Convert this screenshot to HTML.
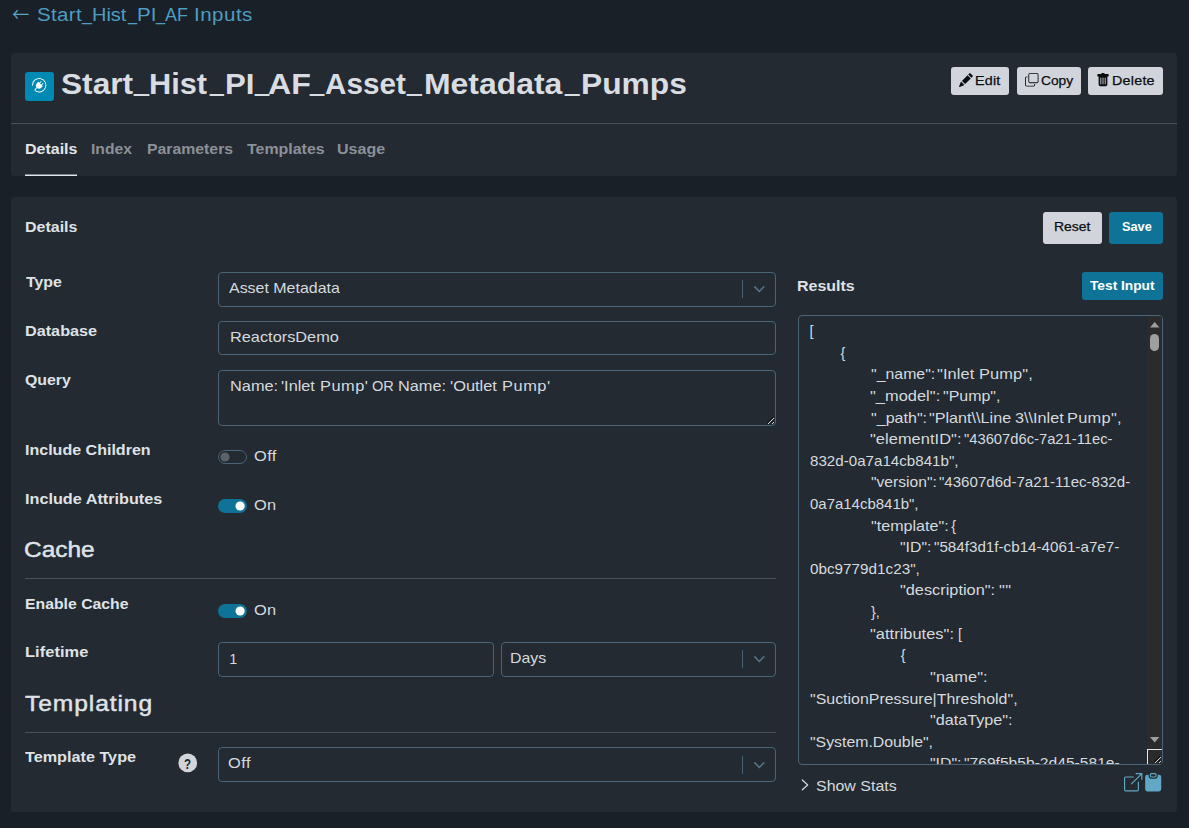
<!DOCTYPE html>
<html lang="en"><head><meta charset="utf-8"><title>Start_Hist_PI_AF_Asset_Metadata_Pumps</title>
<style>
html,body{margin:0;padding:0}
body{width:1189px;height:828px;overflow:hidden;background:#192027;position:relative;font-family:"Liberation Sans",sans-serif;}
.a{position:absolute;box-sizing:border-box}
.t{position:absolute;white-space:pre;line-height:1;transform-origin:0 50%;display:block}
.g{position:absolute;left:0;white-space:pre;line-height:1}
.c{display:inline-block;position:relative;transform-origin:0 50%}
.card{background:#232a31;border-radius:3px}
.btn{border-radius:3px;background:#d1d5db}
.btn.pri{background:#0f7398}
.inp{border:1px solid #4a6376;border-radius:4px;background:#232a31}
.hr{height:1px;background:#4a525a}
svg{position:absolute;overflow:visible}
</style></head><body>
<!-- back arrow -->


<!-- header card -->
<div class="a card" style="left:11px;top:53px;width:1166px;height:123px"></div>
<div class="a hr" style="left:11px;top:123px;width:1166px"></div>
<div class="a" style="left:25px;top:72px;width:29px;height:29px;border-radius:3px;background:#0089b3"></div>
<svg style="left:32.3px;top:78.3px" width="14.4" height="14.4" viewBox="0 0 16 16" fill="#fff"><path fill-rule="evenodd" d="M1 8a7 7 0 1 1 2.898 5.673c-.167-.121-.216-.406-.002-.62l1.800-1.800a3.500 3.500 0 0 0 4.572-.328l1.414-1.415a.5.500 0 0 0 0-.707l-.707-.707 1.559-1.563a.5.500 0 1 0-.708-.706l-1.559 1.562-1.414-1.414 1.560-1.562a.5.500 0 1 0-.707-.706l-1.560 1.560-.707-.706a.5.500 0 0 0-.707 0L5.318 5.975a3.500 3.500 0 0 0-.328 4.571l-1.800 1.800c-.58.580-.62 1.600.121 2.137A8 8 0 1 0 0 8a.5.500 0 0 0 1 0Z"/></svg>

<!-- header buttons -->
<div class="a btn" style="left:951px;top:67px;width:58px;height:28px"></div>
<div class="a btn" style="left:1017px;top:67px;width:64px;height:28px"></div>
<div class="a btn" style="left:1088px;top:67px;width:75px;height:28px"></div>
<svg style="left:959px;top:72.500px" width="14" height="14" viewBox="0 0 16 16" fill="#090b0e"><path d="M12.854.146a.5.5 0 0 0-.707 0L10.5 1.793 14.207 5.5l1.647-1.646a.5.5 0 0 0 0-.708l-3-3zm.646 6.061L9.793 2.500 3.293 9H3.500a.5.5 0 0 1 .5.5v.5h.5a.5.5 0 0 1 .5.5v.5h.5a.5.5 0 0 1 .5.5v.5h.5a.5.5 0 0 1 .5.5v.207l6.500-6.500zm-7.468 7.468A.5.5 0 0 1 6 13.500V13h-.5a.5.5 0 0 1-.5-.5V12h-.5a.5.5 0 0 1-.5-.5V11h-.5a.5.5 0 0 1-.5-.5V10h-.5a.499.499 0 0 1-.175-.032l-.179.178a.5.5 0 0 0-.110.168l-2 5a.5.5 0 0 0 .650.650l5-2a.5.5 0 0 0 .168-.110l.178-.178z"/></svg>
<svg style="left:1024.500px;top:72.500px" width="13.500" height="13.500" viewBox="0 0 16 16" fill="#090b0e"><path fill-rule="evenodd" d="M4 2a2 2 0 0 1 2-2h8a2 2 0 0 1 2 2v8a2 2 0 0 1-2 2H6a2 2 0 0 1-2-2V2Zm2-1a1 1 0 0 0-1 1v8a1 1 0 0 0 1 1h8a1 1 0 0 0 1-1V2a1 1 0 0 0-1-1H6ZM2 5a1 1 0 0 0-1 1v8a1 1 0 0 0 1 1h8a1 1 0 0 0 1-1v-1h1v1a2 2 0 0 1-2 2H2a2 2 0 0 1-2-2V6a2 2 0 0 1 2-2h1v1H2Z"/></svg>
<svg style="left:1096px;top:72.800px" width="14" height="14" viewBox="0 0 16 16" fill="#090b0e"><path d="M2.500 1a1 1 0 0 0-1 1v1a1 1 0 0 0 1 1H3v9a2 2 0 0 0 2 2h6a2 2 0 0 0 2-2V4h.5a1 1 0 0 0 1-1V2a1 1 0 0 0-1-1H10a1 1 0 0 0-1-1H7a1 1 0 0 0-1 1H2.500zm3 4a.5.5 0 0 1 .5.5v7a.5.5 0 0 1-1 0v-7a.5.5 0 0 1 .5-.5zM8 5a.5.5 0 0 1 .5.5v7a.5.5 0 0 1-1 0v-7A.5.5 0 0 1 8 5zm3 .5v7a.5.5 0 0 1-1 0v-7a.5.5 0 0 1 1 0z"/></svg>

<!-- tab underline -->
<div class="a" style="left:25px;top:174px;width:52px;height:1px;background:#7f858b"></div><div class="a" style="left:25px;top:175px;width:52px;height:1px;background:#e2e5e9"></div>

<!-- details card -->
<div class="a card" style="left:11px;top:197px;width:1166px;height:615px"></div>
<div class="a btn" style="left:1043px;top:212px;width:59px;height:32px"></div>
<div class="a btn pri" style="left:1109px;top:212px;width:54px;height:32px"></div>
<div class="a btn pri" style="left:1082px;top:272px;width:81px;height:28px"></div>

<!-- form controls -->
<div class="a inp" style="left:217.5px;top:271.5px;width:558.5px;height:35px"></div>
<div class="a" style="left:742px;top:280px;width:1px;height:18px;background:#4a6376"></div>
<svg style="left:753.700px;top:286px" width="10.6" height="7" viewBox="0 0 11.2 7" preserveAspectRatio="none"><path d="M0.9 0.9 5.6 5.5 10.3 0.9" fill="none" stroke="#587183" stroke-width="1.7" stroke-linecap="round" stroke-linejoin="round"/></svg>
<div class="a inp" style="left:217.5px;top:320.5px;width:558.5px;height:34.5px"></div>
<div class="a inp" style="left:217.5px;top:369.5px;width:558.5px;height:56.5px"></div>
<svg style="left:0;top:0" width="1189" height="828" shape-rendering="crispEdges"><rect x="767" y="422" width="1" height="1" fill="#0c0e10"/><rect x="768" y="421" width="1" height="1" fill="#0c0e10"/><rect x="769" y="420" width="1" height="1" fill="#0c0e10"/><rect x="770" y="419" width="1" height="1" fill="#0c0e10"/><rect x="771" y="418" width="1" height="1" fill="#0c0e10"/><rect x="772" y="417" width="1" height="1" fill="#0c0e10"/><rect x="771" y="422" width="1" height="1" fill="#0c0e10"/><rect x="772" y="421" width="1" height="1" fill="#0c0e10"/><rect x="768" y="423" width="1" height="1" fill="#d4d4d4"/><rect x="769" y="422" width="1" height="1" fill="#d4d4d4"/><rect x="770" y="421" width="1" height="1" fill="#d4d4d4"/><rect x="771" y="420" width="1" height="1" fill="#d4d4d4"/><rect x="772" y="419" width="1" height="1" fill="#d4d4d4"/><rect x="773" y="418" width="1" height="1" fill="#d4d4d4"/><rect x="772" y="423" width="1" height="1" fill="#d4d4d4"/><rect x="773" y="422" width="1" height="1" fill="#d4d4d4"/></svg>

<!-- toggles -->
<svg style="left:0;top:0" width="1189" height="828" viewBox="0 0 1189 828">
<rect x="218.500" y="450.500" width="28" height="13" rx="6.500" fill="none" stroke="#4a6376" stroke-width="1"/>
<circle cx="225" cy="457" r="4.600" fill="#5d6269"/>
<rect x="218" y="499" width="28.900" height="14" rx="7" fill="#0f7398"/>
<circle cx="240.100" cy="506" r="4.600" fill="#fff"/>
<rect x="218" y="604" width="28.900" height="14" rx="7" fill="#0f7398"/>
<circle cx="240.100" cy="611" r="4.600" fill="#fff"/>
</svg>
<div class="a hr" style="left:25px;top:578px;width:751px"></div>
<div class="a inp" style="left:217.5px;top:642px;width:276.5px;height:34.500px"></div>
<div class="a inp" style="left:500.5px;top:642px;width:275.5px;height:35px"></div>
<div class="a" style="left:742px;top:650px;width:1px;height:18px;background:#4a6376"></div>
<svg style="left:753.700px;top:656px" width="10.6" height="7" viewBox="0 0 11.2 7" preserveAspectRatio="none"><path d="M0.9 0.9 5.6 5.5 10.3 0.9" fill="none" stroke="#587183" stroke-width="1.7" stroke-linecap="round" stroke-linejoin="round"/></svg>
<div class="a hr" style="left:25px;top:732px;width:751px"></div>
<svg style="left:0;top:0" width="1189" height="828"><circle cx="187.750" cy="762.950" r="9.400" fill="#d1d5db"/></svg>
<div class="a inp" style="left:217.5px;top:747px;width:558.5px;height:35px"></div>
<div class="a" style="left:742px;top:756px;width:1px;height:18px;background:#4a6376"></div>
<svg style="left:753.700px;top:762.300px" width="10.6" height="7" viewBox="0 0 11.2 7" preserveAspectRatio="none"><path d="M0.9 0.9 5.6 5.5 10.3 0.9" fill="none" stroke="#587183" stroke-width="1.7" stroke-linecap="round" stroke-linejoin="round"/></svg>

<span class="t" style="left:12.11px;top:3.89px;font-size:19.5px;font-weight:400;color:#5aa3c6;font-family:'Noto Sans CJK JP','Noto Sans CJK SC','DejaVu Sans',sans-serif;transform:scaleX(0.8889);">←</span>
<div class="g" style="top:6.36px;font-size:18px;font-weight:400;color:#4f9dc3"><span class="c" style="letter-spacing:0.293px;left:37.06px;transform:scaleX(1.1400);">Start</span><span class="c" style="left:42.59px;top:-1.8px;transform:scaleX(0.9825);">_</span><span class="c" style="left:42.74px;transform:scaleX(1.1095);">Hist</span><span class="c" style="left:47.06px;top:-1.8px;transform:scaleX(0.9076);">_</span><span class="c" style="letter-spacing:0.148px;left:46.58px;transform:scaleX(1.1400);">PI</span><span class="c" style="left:48.13px;top:-1.8px;transform:scaleX(0.9076);">_</span><span class="c" style="left:46.96px;transform:scaleX(0.9950);">AF</span> <span class="c" style="letter-spacing:0.429px;left:47.92px;transform:scaleX(1.1400);">Inputs</span></div>
<div class="g" style="top:69.62px;font-size:28.8px;font-weight:700;color:#d9dde1"><span class="c" style="left:61.21px;transform:scaleX(1.0996);">Start</span><span class="c" style="font-weight:400;left:68.01px;top:-3.2px;transform:scaleX(0.9357);">_</span><span class="c" style="left:67.65px;transform:scaleX(1.0673);">Hist</span><span class="c" style="font-weight:400;left:73.75px;top:-3.2px;transform:scaleX(0.8538);">_</span><span class="c" style="left:72.90px;transform:scaleX(1.0840);">PI</span><span class="c" style="font-weight:400;left:75.43px;top:-3.2px;transform:scaleX(0.8830);">_</span><span class="c" style="left:72.72px;transform:scaleX(1.1163);">AF</span><span class="c" style="font-weight:400;left:76.53px;top:-3.2px;transform:scaleX(0.8830);">_</span><span class="c" style="left:75.25px;transform:scaleX(1.0302);">Asset</span><span class="c" style="font-weight:400;left:79.09px;top:-3.2px;transform:scaleX(0.9181);">_</span><span class="c" style="left:80.16px;transform:scaleX(1.1086);">Metadata</span><span class="c" style="font-weight:400;left:95.94px;top:-3.2px;transform:scaleX(0.9006);">_</span><span class="c" style="left:95.73px;transform:scaleX(1.1026);">Pumps</span></div>
<span class="t" style="left:975.38px;top:74.93px;font-size:12.6px;font-weight:400;color:#0b0e11;-webkit-text-stroke:0.25px #0b0e11;transform:scaleX(1.1400);letter-spacing:0.182px;">Edit</span>
<span class="t" style="left:1040.75px;top:74.93px;font-size:12.6px;font-weight:400;color:#0b0e11;-webkit-text-stroke:0.25px #0b0e11;transform:scaleX(1.0928);">Copy</span>
<span class="t" style="left:1112.38px;top:74.93px;font-size:12.6px;font-weight:400;color:#0b0e11;-webkit-text-stroke:0.25px #0b0e11;transform:scaleX(1.1400);letter-spacing:0.190px;">Delete</span>
<span class="t" style="left:25.10px;top:141.81px;font-size:14.4px;font-weight:700;color:#e2e5e9;transform:scaleX(1.1107);">Details</span>
<span class="t" style="left:90.72px;top:141.81px;font-size:14.4px;font-weight:700;color:#8b9198;transform:scaleX(1.0869);">Index</span>
<span class="t" style="left:146.51px;top:141.81px;font-size:14.4px;font-weight:700;color:#8b9198;transform:scaleX(1.0978);">Parameters</span>
<span class="t" style="left:247.00px;top:141.81px;font-size:14.4px;font-weight:700;color:#8b9198;transform:scaleX(1.1067);">Templates</span>
<span class="t" style="left:337.25px;top:141.81px;font-size:14.4px;font-weight:700;color:#8b9198;transform:scaleX(1.1141);">Usage</span>
<span class="t" style="left:25.10px;top:220.31px;font-size:14.4px;font-weight:700;color:#dfe2e6;transform:scaleX(1.1107);">Details</span>
<span class="t" style="left:1053.81px;top:221.33px;font-size:12.6px;font-weight:400;color:#0b0e11;-webkit-text-stroke:0.25px #0b0e11;transform:scaleX(1.1072);">Reset</span>
<span class="t" style="left:1121.50px;top:221.33px;font-size:12.6px;font-weight:700;color:#ffffff;transform:scaleX(1.0133);">Save</span>
<span class="t" style="left:25.50px;top:274.81px;font-size:14.4px;font-weight:700;color:#dfe2e6;transform:scaleX(1.1031);">Type</span>
<span class="t" style="left:24.79px;top:323.81px;font-size:14.4px;font-weight:700;color:#dfe2e6;transform:scaleX(1.1262);">Database</span>
<span class="t" style="left:25.30px;top:372.81px;font-size:14.4px;font-weight:700;color:#dfe2e6;transform:scaleX(1.1028);">Query</span>
<span class="t" style="left:24.80px;top:442.81px;font-size:14.4px;font-weight:700;color:#dfe2e6;transform:scaleX(1.1141);">Include Children</span>
<span class="t" style="left:24.79px;top:491.81px;font-size:14.4px;font-weight:700;color:#dfe2e6;transform:scaleX(1.1272);">Include Attributes</span>
<span class="t" style="left:24.45px;top:538.72px;font-size:21.6px;font-weight:400;color:#dfe2e6;-webkit-text-stroke:0.45px #dfe2e6;transform:scaleX(1.1330);">Cache</span>
<span class="t" style="left:24.61px;top:596.81px;font-size:14.4px;font-weight:700;color:#dfe2e6;transform:scaleX(1.0968);">Enable Cache</span>
<span class="t" style="left:24.57px;top:644.81px;font-size:14.4px;font-weight:700;color:#dfe2e6;transform:scaleX(1.1400);letter-spacing:0.050px;">Lifetime</span>
<span class="t" style="left:25.22px;top:693.02px;font-size:21.6px;font-weight:400;color:#dfe2e6;-webkit-text-stroke:0.45px #dfe2e6;transform:scaleX(1.1400);letter-spacing:0.788px;">Templating</span>
<span class="t" style="left:25.00px;top:750.11px;font-size:14.4px;font-weight:700;color:#dfe2e6;transform:scaleX(1.1258);">Template Type</span>
<span class="t" style="left:229.00px;top:280.81px;font-size:14.4px;font-weight:400;color:#d6dade;transform:scaleX(1.1084);">Asset Metadata</span>
<span class="t" style="left:229.72px;top:330.11px;font-size:14.4px;font-weight:400;color:#d6dade;transform:scaleX(1.1344);">ReactorsDemo</span>
<div class="g" style="top:379.01px;font-size:14.4px;font-weight:400;color:#d6dade"><span class="c" style="left:230.12px;transform:scaleX(1.1354);">Name:</span> <span class="c" style="left:235.05px;transform:scaleX(1.1315);">'Inlet</span> <span class="c" style="letter-spacing:0.415px;left:239.87px;transform:scaleX(1.1400);">Pump'</span> <span class="c" style="left:245.55px;transform:scaleX(1.0134);">OR</span> <span class="c" style="left:246.07px;transform:scaleX(1.1329);">Name:</span> <span class="c" style="left:251.28px;transform:scaleX(1.1396);">'Outlet</span> <span class="c" style="letter-spacing:0.480px;left:257.81px;transform:scaleX(1.1400);">Pump'</span></div>
<span class="t" style="left:254.23px;top:448.81px;font-size:14.4px;font-weight:400;color:#d6dade;transform:scaleX(1.1400);letter-spacing:0.359px;">Off</span>
<span class="t" style="left:254.23px;top:497.81px;font-size:14.4px;font-weight:400;color:#d6dade;transform:scaleX(1.1400);letter-spacing:0.257px;">On</span>
<span class="t" style="left:254.23px;top:602.81px;font-size:14.4px;font-weight:400;color:#d6dade;transform:scaleX(1.1400);letter-spacing:0.257px;">On</span>
<span class="t" style="left:229.30px;top:651.81px;font-size:14.4px;font-weight:400;color:#d6dade;">1</span>
<span class="t" style="left:510.26px;top:650.81px;font-size:14.4px;font-weight:400;color:#d6dade;transform:scaleX(1.1046);">Days</span>
<span class="t" style="left:228.23px;top:755.81px;font-size:14.4px;font-weight:400;color:#d6dade;transform:scaleX(1.1400);letter-spacing:0.403px;">Off</span>
<span class="t" style="left:797.00px;top:279.11px;font-size:14.4px;font-weight:700;color:#dfe2e6;transform:scaleX(1.1082);">Results</span>
<span class="t" style="left:1090.30px;top:280.33px;font-size:12.6px;font-weight:700;color:#ffffff;transform:scaleX(1.0896);">Test Input</span>
<span class="t" style="left:184.34px;top:756.65px;font-size:14px;font-weight:700;color:#20252b;transform:scaleX(0.8202);">?</span>
<span class="t" style="left:815.80px;top:778.81px;font-size:14.4px;font-weight:400;color:#d6dade;transform:scaleX(1.1079);">Show Stats</span>

<!-- results textarea -->
<div class="a inp" id="ta" style="left:798px;top:315px;width:365px;height:450px"></div>
<div class="a" style="left:1147px;top:316px;width:15px;height:448px;background:#2b2b2b;border-radius:0 3px 2px 0"></div>
<svg style="left:1149.700px;top:321.700px" width="9.400" height="5.400" viewBox="0 0 9.400 5.400"><path d="M0 5.400 4.700 0 9.400 5.400Z" fill="#9e9e9e"/></svg>
<div class="a" style="left:1150px;top:334px;width:9px;height:17px;border-radius:4.500px;background:#9f9f9f"></div>
<svg style="left:1149.700px;top:736.900px" width="9.400" height="5.400" viewBox="0 0 9.400 5.400"><path d="M0 0 4.700 5.400 9.400 0Z" fill="#9e9e9e"/></svg>
<div class="a" style="left:1147px;top:749px;width:15px;height:15px;background:#2b2b2b;border-left:1px solid #e6e6e6;border-top:1px solid #e6e6e6;border-radius:0 0 2px 0"></div>
<svg style="left:0;top:0" width="1189" height="828" shape-rendering="crispEdges"><rect x="1154" y="761" width="1" height="1" fill="#0c0c0c"/><rect x="1155" y="760" width="1" height="1" fill="#0c0c0c"/><rect x="1156" y="759" width="1" height="1" fill="#0c0c0c"/><rect x="1157" y="758" width="1" height="1" fill="#0c0c0c"/><rect x="1158" y="757" width="1" height="1" fill="#0c0c0c"/><rect x="1159" y="756" width="1" height="1" fill="#0c0c0c"/><rect x="1158" y="761" width="1" height="1" fill="#0c0c0c"/><rect x="1159" y="760" width="1" height="1" fill="#0c0c0c"/><rect x="1155" y="762" width="1" height="1" fill="#d4d4d4"/><rect x="1156" y="761" width="1" height="1" fill="#d4d4d4"/><rect x="1157" y="760" width="1" height="1" fill="#d4d4d4"/><rect x="1158" y="759" width="1" height="1" fill="#d4d4d4"/><rect x="1159" y="758" width="1" height="1" fill="#d4d4d4"/><rect x="1160" y="757" width="1" height="1" fill="#d4d4d4"/><rect x="1159" y="762" width="1" height="1" fill="#d4d4d4"/><rect x="1160" y="761" width="1" height="1" fill="#d4d4d4"/></svg>
<div class="a" id="rt" style="left:0;top:0;width:1147px;height:764px;overflow:hidden">
<div class="g" style="top:324.11px;font-size:14.4px;font-weight:400;color:#d6dade"><span class="c" style="left:809.40px;">[</span></div>
<div class="g" style="top:345.71px;font-size:14.4px;font-weight:400;color:#d6dade"><span class="c" style="left:840.57px;">{</span></div>
<div class="g" style="top:367.31px;font-size:14.4px;font-weight:400;color:#d6dade"><span class="c" style="left:870.50px;transform:scaleX(1.1033);">"_name":</span> <span class="c" style="letter-spacing:0.084px;left:874.87px;transform:scaleX(1.1400);">"Inlet Pump",</span></div>
<div class="g" style="top:388.91px;font-size:14.4px;font-weight:400;color:#d6dade"><span class="c" style="letter-spacing:0.020px;left:870.49px;transform:scaleX(1.1400);">"_model":</span> <span class="c" style="left:877.42px;transform:scaleX(1.1088);">"Pump",</span></div>
<div class="g" style="top:410.51px;font-size:14.4px;font-weight:400;color:#d6dade"><span class="c" style="left:870.50px;transform:scaleX(1.1161);">"_path":</span> <span class="c" style="left:874.66px;transform:scaleX(1.1233);">"Plant\\Line</span> <span class="c" style="left:883.80px;transform:scaleX(1.1259);">3\\Inlet</span> <span class="c" style="letter-spacing:0.243px;left:888.31px;transform:scaleX(1.1400);">Pump",</span></div>
<div class="g" style="top:432.11px;font-size:14.4px;font-weight:400;color:#d6dade"><span class="c" style="letter-spacing:0.042px;left:870.49px;transform:scaleX(1.1400);">"elementID":</span> <span class="c" style="left:880.05px;transform:scaleX(1.0250);">"43607d6c-7a21-11ec-</span></div>
<div class="g" style="top:453.71px;font-size:14.4px;font-weight:400;color:#d6dade"><span class="c" style="left:809.83px;transform:scaleX(1.0522);">832d-0a7a14cb841b",</span></div>
<div class="g" style="top:475.31px;font-size:14.4px;font-weight:400;color:#d6dade"><span class="c" style="left:870.51px;transform:scaleX(1.0864);">"version":</span> <span class="c" style="left:874.16px;transform:scaleX(1.0476);">"43607d6d-7a21-11ec-832d-</span></div>
<div class="g" style="top:496.91px;font-size:14.4px;font-weight:400;color:#d6dade"><span class="c" style="left:809.83px;transform:scaleX(1.0400);">0a7a14cb841b",</span></div>
<div class="g" style="top:518.51px;font-size:14.4px;font-weight:400;color:#d6dade"><span class="c" style="left:870.50px;transform:scaleX(1.1194);">"template":</span> <span class="c" style="left:877.73px;">{</span></div>
<div class="g" style="top:540.11px;font-size:14.4px;font-weight:400;color:#d6dade"><span class="c" style="left:900.41px;transform:scaleX(1.0973);">"ID":</span> <span class="c" style="left:901.24px;transform:scaleX(1.0556);">"584f3d1f-cb14-4061-a7e7-</span></div>
<div class="g" style="top:561.71px;font-size:14.4px;font-weight:400;color:#d6dade"><span class="c" style="left:809.82px;transform:scaleX(1.0610);">0bc9779d1c23",</span></div>
<div class="g" style="top:583.31px;font-size:14.4px;font-weight:400;color:#d6dade"><span class="c" style="left:900.39px;transform:scaleX(1.1341);">"description":</span> <span class="c" style="letter-spacing:0.290px;left:911.60px;transform:scaleX(1.1400);">""</span></div>
<div class="g" style="top:604.91px;font-size:14.4px;font-weight:400;color:#d6dade"><span class="c" style="left:870.77px;transform:scaleX(1.0121);">},</span></div>
<div class="g" style="top:626.51px;font-size:14.4px;font-weight:400;color:#d6dade"><span class="c" style="letter-spacing:0.020px;left:870.49px;transform:scaleX(1.1400);">"attributes":</span> <span class="c" style="left:880.35px;">[</span></div>
<div class="g" style="top:648.11px;font-size:14.4px;font-weight:400;color:#d6dade"><span class="c" style="left:900.67px;">{</span></div>
<div class="g" style="top:669.71px;font-size:14.4px;font-weight:400;color:#d6dade"><span class="c" style="letter-spacing:0.061px;left:929.89px;transform:scaleX(1.1400);">"name":</span></div>
<div class="g" style="top:692.11px;font-size:14.4px;font-weight:400;color:#d6dade"><span class="c" style="left:809.80px;transform:scaleX(1.1068);">"SuctionPressure|Threshold",</span></div>
<div class="g" style="top:712.91px;font-size:14.4px;font-weight:400;color:#d6dade"><span class="c" style="left:929.89px;transform:scaleX(1.1252);">"dataType":</span></div>
<div class="g" style="top:734.51px;font-size:14.4px;font-weight:400;color:#d6dade"><span class="c" style="left:809.80px;transform:scaleX(1.1002);">"System.Double",</span></div>
<div class="g" style="top:756.11px;font-size:14.4px;font-weight:400;color:#d6dade"><span class="c" style="left:929.91px;transform:scaleX(1.0981);">"ID":</span> <span class="c" style="left:931.73px;transform:scaleX(1.0849);">"769f5b5b-2d45-581e-</span></div>

</div>

<!-- show stats -->
<svg style="left:801px;top:779.400px" width="8" height="12" viewBox="0 0 8 12"><path d="M1.300 1 6.700 5.900 1.300 10.800" fill="none" stroke="#d3d7dc" stroke-width="1.300" stroke-linecap="round" stroke-linejoin="round"/></svg>
<svg style="left:1123.600px;top:772.800px" width="18.400" height="18.400" viewBox="0 0 16 16" fill="#60a8c5"><path fill-rule="evenodd" d="M8.636 3.500a.5.5 0 0 0-.5-.5H1.500A1.500 1.500 0 0 0 0 4.500v10A1.500 1.500 0 0 0 1.500 16h10a1.500 1.500 0 0 0 1.500-1.500V7.864a.5.5 0 0 0-1 0V14.500a.5.5 0 0 1-.5.5h-10a.5.5 0 0 1-.5-.5v-10a.5.5 0 0 1 .5-.5h6.636a.5.5 0 0 0 .5-.5z"/><path fill-rule="evenodd" d="M16 .5a.5.5 0 0 0-.5-.5h-5a.5.5 0 0 0 0 1h3.793L6.146 9.146a.5.5 0 1 0 .708.708L15 1.707V5.500a.5.5 0 0 0 1 0v-5z"/></svg>
<svg style="left:1143.600px;top:772.800px" width="18.400" height="18.400" viewBox="0 0 16 16" fill="#60a8c5"><path fill-rule="evenodd" d="M10 1.500a.5.5 0 0 0-.5-.5h-3a.5.5 0 0 0-.5.5v1a.5.5 0 0 0 .5.5h3a.5.5 0 0 0 .5-.5v-1Zm-5 0A1.500 1.500 0 0 1 6.500 0h3A1.500 1.500 0 0 1 11 1.500v1A1.500 1.500 0 0 1 9.500 4h-3A1.500 1.500 0 0 1 5 2.500v-1Zm-2 0h1v1A2.500 2.500 0 0 0 6.500 5h3A2.500 2.500 0 0 0 12 2.500v-1h1a2 2 0 0 1 2 2V14a2 2 0 0 1-2 2H3a2 2 0 0 1-2-2V3.500a2 2 0 0 1 2-2Z"/></svg>

</body></html>
